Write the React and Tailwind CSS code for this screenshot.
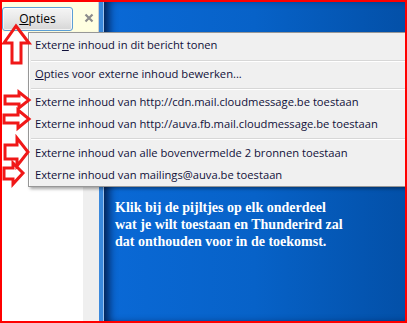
import React from "react";

export default function App() {
  const item = "h-[22px] shrink-0 flex items-center pl-[6px] whitespace-nowrap text-[#10103a] leading-none";
  return (
    <div
      className="w-[407px] h-[323px] border-2 border-[#ff0000] relative overflow-hidden flex bg-white"
      style={{ fontFamily: '"Open Sans", "Noto Sans", sans-serif' }}
    >
      {/* left pane */}
      <div className="w-[97px] flex flex-col">
        <div className="h-[30px] bg-[#ffffe1] flex items-end pb-[1px] border-r border-[#cfcfcf]">
          <button className="w-[71px] h-[24px] rounded-[3px] border border-[#5c9fd6] bg-linear-to-b from-[#f5f5f5] via-[#e8e8e8] to-[#d6d6d6] text-[12px] text-black leading-none flex items-center justify-center shadow-[inset_0_0_0_1px_rgba(255,255,255,0.7)]">
            <span><span className="underline">O</span>pties</span>
          </button>
          <svg className="ml-[11px] mb-[8px]" width="10" height="10" viewBox="0 0 10 10">
            <path d="M1.5 1.5 L8.5 8.5 M8.5 1.5 L1.5 8.5" stroke="#8c8c8c" strokeWidth="2.2" />
          </svg>
        </div>
        <div className="flex-1 flex">
          <div className="flex-1 bg-white" />
          <div className="w-[16px] bg-[#efefef]" />
        </div>
      </div>
      {/* blue stripe */}
      <div className="w-[4px] bg-[#3b89dc]" />
      <div className="w-[1px] bg-[#9fc4ee]" />
      {/* blue pane */}
      <div className="flex-1 bg-linear-to-r from-[#0a69d6] via-[#0762c8] to-[#0350a8] shadow-[inset_8px_0_8px_-3px_rgba(0,10,40,0.75)] pt-[197px] pl-[11px]">
        <p
          className="text-white font-bold text-[14px] leading-[17px]"
          style={{ fontFamily: '"Liberation Serif", "Times New Roman", serif' }}
        >
          Klik bij de pijltjes op elk onderdeel
          <br />
          wat je wilt toestaan en Thunderird zal
          <br />
          dat onthouden voor in de toekomst.
        </p>
      </div>

      {/* dropdown menu */}
      <div className="absolute left-[26px] top-[30px] right-0 h-[155px] flex flex-col bg-[#f0f0f0] border border-r-0 border-[#979797] shadow-[2px_2px_3px_rgba(0,0,0,0.35)] pt-[1px] text-[11.2px] leading-none">
        <div className="absolute left-0 top-0 bottom-0 w-[1px] bg-white" />
        <div className={item}>
          <span>
            Exter<span className="underline">n</span>e inhoud in dit bericht tonen
          </span>
        </div>
        <div className="h-[7px] shrink-0 ml-[2px] flex flex-col justify-end pb-[1px]">
          <div className="h-[1px] bg-[#d7d7d7]" />
          <div className="h-[1px] bg-white" />
        </div>
        <div className={item}>
          <span>
            <span className="underline">O</span>pties voor externe inhoud bewerken...
          </span>
        </div>
        <div className="h-[6px] shrink-0 ml-[2px] flex flex-col justify-end pb-[1px]">
          <div className="h-[1px] bg-[#d7d7d7]" />
          <div className="h-[1px] bg-white" />
        </div>
        <div className={item}>Externe inhoud van http://cdn.mail.cloudmessage.be toestaan</div>
        <div className={item}>Externe inhoud van http://auva.fb.mail.cloudmessage.be toestaan</div>
        <div className="h-[7px] shrink-0 ml-[2px] flex flex-col justify-end pb-[2px]">
          <div className="h-[1px] bg-[#d7d7d7]" />
          <div className="h-[1px] bg-white" />
        </div>
        <div className={item}>Externe inhoud van alle bovenvermelde 2 bronnen toestaan</div>
        <div className="h-[21px] shrink-0 flex items-center pl-[6px] whitespace-nowrap text-[#10103a] leading-none">
          Externe inhoud van mailings@auva.be toestaan
        </div>
      </div>

      {/* red annotation arrows */}
      <svg
        className="absolute left-[-2px] top-[-2px] pointer-events-none"
        width="407"
        height="323"
        viewBox="0 0 407 323"
      >
        <g fill="none" stroke="#f01818" strokeWidth="3" strokeLinejoin="miter">
          <polygon points="16,26 29,43 21,43 21,63 12,63 12,43 4,43" />
          <polygon points="5,96 19,96 19,92 29,100 19,108 19,104 5,104" />
          <polygon points="4,115 18,115 18,110 29,119 18,128 18,123 4,123" />
          <polygon points="5,145 17,145 17,138 28,152 17,166 17,159 5,159" />
          <polygon points="4,168 13,168 13,163 23,173 13,184 13,179 4,179" />
        </g>
      </svg>
    </div>
  );
}
